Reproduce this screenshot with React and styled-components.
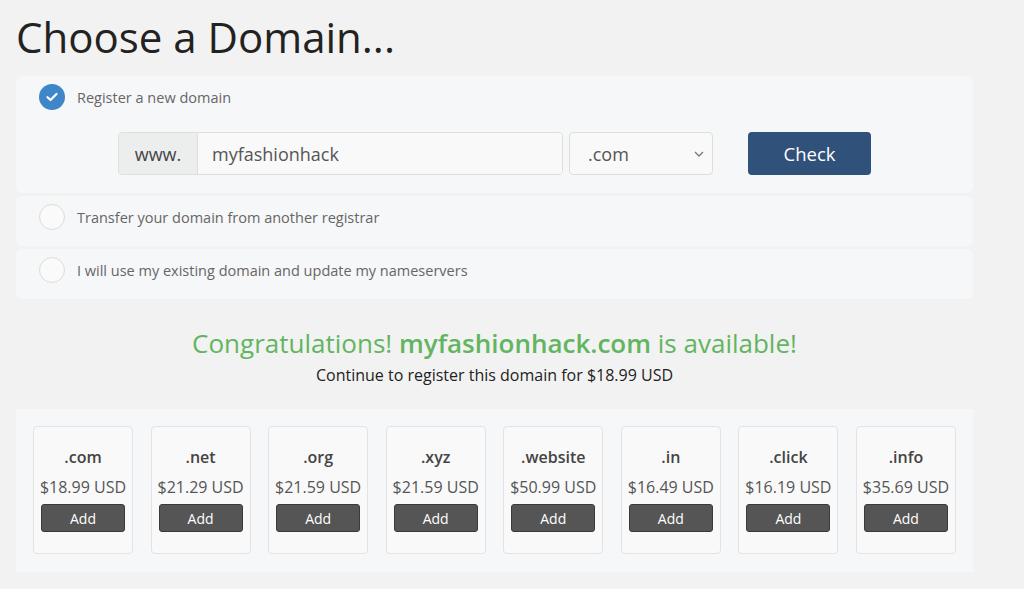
import React from "react";
import styled, { createGlobalStyle } from "styled-components";

const Global = createGlobalStyle`
  html, body { margin: 0; padding: 0; background: #f2f2f2; }
  body { font-family: "Open Sans", "Liberation Sans", sans-serif; color: #333; }
`;

const Page = styled.div`
  width: 957px;
  padding: 0 0 0 16px;
`;

const Title = styled.h1`
  margin: 0;
  padding: 9px 0 0 0;
  height: 76px;
  box-sizing: border-box;
  font-size: 42px;
  font-weight: 400;
  line-height: 56px;
  color: #222;
`;

const Options = styled.div`
  display: flex;
  flex-direction: column;
  gap: 3px;
`;

const OptionPanel = styled.div`
  background: #f6f7f9;
  border-radius: 6px;
  padding: ${(p) => (p.$expanded ? "8px 0 18px" : "8px 0")};
  min-height: ${(p) => (p.$expanded ? "117px" : "50px")};
  box-sizing: border-box;
`;

const OptionLabel = styled.label`
  display: flex;
  align-items: center;
  gap: 12px;
  padding-left: 23px;
  height: 26px;
  font-size: 14.5px;
  color: #666;
`;

const Radio = styled.span`
  width: 26px;
  height: 26px;
  border-radius: 50%;
  box-sizing: border-box;
  display: flex;
  align-items: center;
  justify-content: center;
  background: ${(p) => (p.$checked ? "#3f86c8" : "#fafafa")};
  border: ${(p) => (p.$checked ? "none" : "1.5px solid #dcdcd8")};
  flex: none;
`;

const SearchRow = styled.div`
  display: flex;
  align-items: center;
  margin: 22px 0 0 102px;
  height: 43px;
`;

const InputGroup = styled.div`
  display: flex;
  width: 445px;
  height: 43px;
  border: 1px solid #dedede;
  border-radius: 4px;
  box-sizing: border-box;
  overflow: hidden;
`;

const Addon = styled.span`
  width: 78px;
  display: flex;
  align-items: center;
  justify-content: center;
  background: #eceded;
  border-right: 1px solid #dedede;
  font-size: 18px;
  color: #444;
`;

const TextInput = styled.div`
  flex: 1;
  background: #f9f9f9;
  display: flex;
  align-items: center;
  padding-left: 14px;
  font-size: 18px;
  color: #555;
`;

const Select = styled.div`
  margin-left: 6px;
  width: 144px;
  height: 43px;
  box-sizing: border-box;
  border: 1px solid #dedede;
  border-radius: 4px;
  background: #f9f9f9;
  display: flex;
  align-items: center;
  justify-content: space-between;
  padding: 0 8px 0 18px;
  font-size: 18px;
  color: #555;
`;

const CheckButton = styled.button`
  margin-left: 35px;
  width: 123px;
  height: 43px;
  border: none;
  border-radius: 4px;
  background: #305179;
  color: #fff;
  font-family: inherit;
  font-size: 18.5px;
`;

const Result = styled.div`
  text-align: center;
  padding-top: 26px;
  height: 110px;
  box-sizing: border-box;
`;

const Congrats = styled.div`
  font-size: 26px;
  line-height: 36px;
  color: #62b55f;
  b { font-weight: 600; }
`;

const Continue = styled.div`
  margin-top: 3px;
  font-size: 16px;
  line-height: 22px;
  color: #222;
`;

const Suggestions = styled.div`
  background: #f6f7f9;
  padding: 17px;
  height: 163px;
  box-sizing: border-box;
  display: flex;
  justify-content: space-between;
`;

const Card = styled.div`
  width: 100px;
  height: 128px;
  box-sizing: border-box;
  background: #f9f9f9;
  border: 1px solid #e3e3e3;
  border-radius: 4px;
  display: flex;
  flex-direction: column;
  align-items: center;
  padding-top: 19px;
`;

const Tld = styled.div`
  font-size: 16px;
  font-weight: 600;
  color: #444;
  line-height: 22px;
`;

const Price = styled.div`
  margin-top: 8px;
  font-size: 16px;
  color: #555;
  line-height: 22px;
`;

const AddButton = styled.button`
  margin-top: 6px;
  width: 84px;
  height: 28px;
  border: 1px solid #3a3a3a;
  border-radius: 3px;
  background: #555;
  color: #fff;
  font-family: inherit;
  font-size: 14px;
  padding: 0;
`;

const domains = [
  [".com", "$18.99 USD"],
  [".net", "$21.29 USD"],
  [".org", "$21.59 USD"],
  [".xyz", "$21.59 USD"],
  [".website", "$50.99 USD"],
  [".in", "$16.49 USD"],
  [".click", "$16.19 USD"],
  [".info", "$35.69 USD"],
];

export default function App() {
  return (
    <>
      <Global />
      <Page>
        <Title>Choose a Domain...</Title>
        <Options>
          <OptionPanel $expanded>
            <OptionLabel>
              <Radio $checked>
                <svg width="12" height="10" viewBox="0 0 12 10">
                  <path d="M1.5 5.2 L4.5 8 L10.5 2" fill="none" stroke="#fff" strokeWidth="2.2" strokeLinecap="round" strokeLinejoin="round" />
                </svg>
              </Radio>
              Register a new domain
            </OptionLabel>
            <SearchRow>
              <InputGroup>
                <Addon>www.</Addon>
                <TextInput>myfashionhack</TextInput>
              </InputGroup>
              <Select>
                .com
                <svg width="10" height="6" viewBox="0 0 10 6">
                  <path d="M1 1 L5 5 L9 1" fill="none" stroke="#777" strokeWidth="1.3" />
                </svg>
              </Select>
              <CheckButton>Check</CheckButton>
            </SearchRow>
          </OptionPanel>
          <OptionPanel>
            <OptionLabel>
              <Radio />
              Transfer your domain from another registrar
            </OptionLabel>
          </OptionPanel>
          <OptionPanel>
            <OptionLabel>
              <Radio />
              I will use my existing domain and update my nameservers
            </OptionLabel>
          </OptionPanel>
        </Options>
        <Result>
          <Congrats>
            Congratulations! <b>myfashionhack.com</b> is available!
          </Congrats>
          <Continue>Continue to register this domain for $18.99 USD</Continue>
        </Result>
        <Suggestions>
          {domains.map(([tld, price]) => (
            <Card key={tld}>
              <Tld>{tld}</Tld>
              <Price>{price}</Price>
              <AddButton>Add</AddButton>
            </Card>
          ))}
        </Suggestions>
      </Page>
    </>
  );
}
